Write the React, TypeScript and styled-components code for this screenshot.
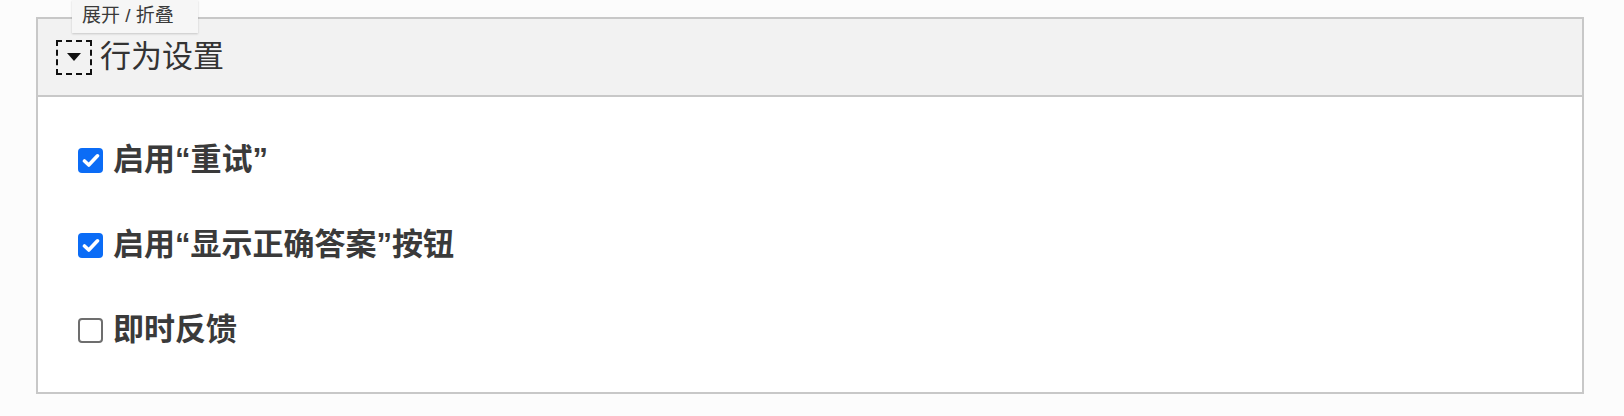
import React, { useState } from "react";
import styled, { createGlobalStyle } from "styled-components";

const Global = createGlobalStyle`
  html, body { margin: 0; padding: 0; background: #fcfcfc; }
  body { font-family: "Liberation Sans", "Noto Sans CJK SC", sans-serif; color: #333; }
`;

const Page = styled.div`
  position: relative;
  padding: 17px 40px 22px 36px;
`;

const Tooltip = styled.div`
  position: absolute;
  top: 0;
  left: 72px;
  width: 126px;
  height: 33px;
  box-sizing: border-box;
  background: #f6f6f6;
  box-shadow: 0 1px 2px rgba(0, 0, 0, 0.18);
  font-size: 19px;
  line-height: 31px;
  color: #3a3a3a;
  padding-left: 10px;
  white-space: nowrap;
  z-index: 2;
`;

const Panel = styled.section`
  border: 2px solid #c8c8c8;
  background: #fff;
`;

const Header = styled.div`
  display: flex;
  align-items: center;
  gap: 8px;
  height: 76px;
  padding-left: 18px;
  background: #f2f2f2;
  border-bottom: 2px solid #c8c8c8;
`;

const Toggle = styled.button`
  width: 36px;
  height: 35px;
  box-sizing: border-box;
  border: 2px dashed #111;
  background: transparent;
  padding: 0;
  display: flex;
  align-items: center;
  justify-content: center;
  cursor: pointer;
`;

const Title = styled.h2`
  margin: 0;
  font-size: 31px;
  font-weight: 400;
  line-height: 40px;
  color: #333;
`;

const Body = styled.div`
  display: flex;
  flex-direction: column;
  gap: 45px;
  padding: 43px 0 42px 40px;
`;

const Row = styled.label`
  display: flex;
  align-items: center;
  gap: 10px;
  height: 40px;
  cursor: pointer;
`;

const Box = styled.span<{ $checked: boolean }>`
  width: 25px;
  height: 25px;
  box-sizing: border-box;
  border-radius: 4px;
  display: flex;
  align-items: center;
  justify-content: center;
  background: ${(p) => (p.$checked ? "#0b6cf6" : "#fff")};
  border: ${(p) => (p.$checked ? "none" : "2px solid #6e6e6e")};
`;

const Label = styled.span`
  font-size: 31px;
  font-weight: 700;
  line-height: 40px;
  color: #3a3a3a;
`;

const items = [
  { text: "启用“重试”", checked: true },
  { text: "启用“显示正确答案”按钮", checked: true },
  { text: "即时反馈", checked: false },
];

export default function App() {
  const [state, setState] = useState(items.map((i) => i.checked));
  return (
    <Page>
      <Global />
      <Tooltip>展开 / 折叠</Tooltip>
      <Panel>
        <Header>
          <Toggle aria-label="展开 / 折叠">
            <svg width="14" height="8" viewBox="0 0 14 8">
              <path d="M0 0 L14 0 L7 8 Z" fill="#111" />
            </svg>
          </Toggle>
          <Title>行为设置</Title>
        </Header>
        <Body>
          {items.map((it, i) => (
            <Row
              key={it.text}
              onClick={() => setState((s) => s.map((v, j) => (j === i ? !v : v)))}
            >
              <Box $checked={state[i]}>
                {state[i] && (
                  <svg width="18" height="15" viewBox="0 0 18 15">
                    <path
                      d="M2.5 8 L6.8 12 L15.5 2.8"
                      fill="none"
                      stroke="#fff"
                      strokeWidth="3.6"
                      strokeLinecap="round"
                      strokeLinejoin="round"
                    />
                  </svg>
                )}
              </Box>
              <Label>{it.text}</Label>
            </Row>
          ))}
        </Body>
      </Panel>
    </Page>
  );
}
